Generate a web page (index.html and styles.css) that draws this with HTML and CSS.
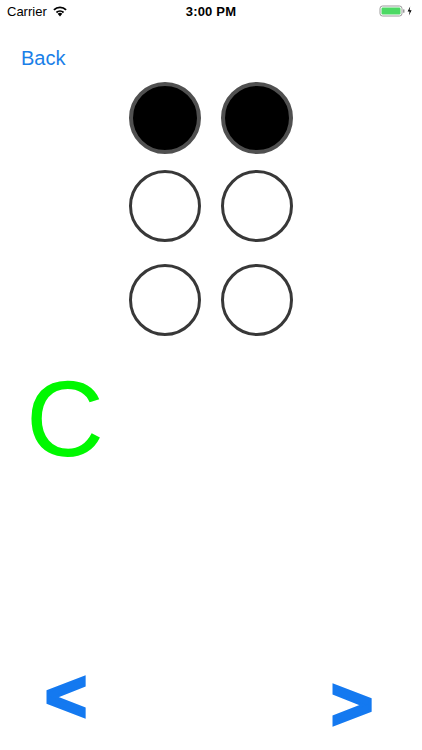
FILE: index.html
```html
<!DOCTYPE html>
<html>
<head>
<meta charset="utf-8">
<link rel="stylesheet" href="styles.css">
</head>
<body>
<div class="page">
  <div class="status">
    <div class="status-left">
      <span class="carrier">Carrier</span>
      <svg class="wifi" width="16" height="12" viewBox="0 0 15 11">
        <path d="M7.5 10.6 L5.3 8.1 A3.2 3.2 0 0 1 9.7 8.1 Z" fill="#000"/>
        <path d="M3.6 6.3 A5.6 5.6 0 0 1 11.4 6.3 L10.3 7.5 A4 4 0 0 0 4.7 7.5 Z" fill="#000"/>
        <path d="M1.2 3.8 A9 9 0 0 1 13.8 3.8 L12.6 5.1 A7.3 7.3 0 0 0 2.4 5.1 Z" fill="#000"/>
      </svg>
    </div>
    <div class="time">3:00 PM</div>
    <div class="status-right">
      <svg width="36" height="12" viewBox="0 0 36 12">
        <rect x="1" y="1" width="22" height="10" rx="2.5" fill="none" stroke="#9a9a9a" stroke-width="1"/>
        <rect x="2.5" y="2.5" width="19" height="7" rx="1.2" fill="#4cd964"/>
        <rect x="24" y="4.2" width="1.5" height="3.6" rx="0.6" fill="#9a9a9a"/>
        <path d="M31.2 1.5 L28.6 6.6 L30.6 6.6 L29.9 10.5 L32.6 5.2 L30.6 5.2 Z" fill="#000"/>
      </svg>
    </div>
  </div>

  <div class="nav">
    <a class="back">Back</a>
  </div>

  <div class="cells">
    <div class="dot filled"></div>
    <div class="dot filled"></div>
    <div class="dot"></div>
    <div class="dot"></div>
    <div class="dot row3"></div>
    <div class="dot row3"></div>
  </div>

  <div class="letter">C</div>

  <div class="arrows">
    <span class="arrow prev">&lt;</span>
    <span class="arrow next">&gt;</span>
  </div>
</div>
</body>
</html>
```

FILE: styles.css
```css
html, body {
  margin: 0;
  padding: 0;
  background: #ffffff;
}

.page {
  width: 422px;
  height: 750px;
  display: flex;
  flex-direction: column;
  font-family: "Liberation Sans", Arial, sans-serif;
  overflow: hidden;
}

.status {
  height: 22px;
  display: flex;
  align-items: center;
  justify-content: space-between;
  padding: 0 7px;
  font-size: 13px;
  color: #000;
}

.status-left {
  display: flex;
  align-items: center;
  gap: 5px;
  width: 120px;
}

.wifi {
  margin-top: -1px;
}

.time {
  font-weight: bold;
  letter-spacing: 0.2px;
}

.status-right {
  width: 120px;
  display: flex;
  justify-content: flex-end;
}

.nav {
  height: 24px;
  margin-top: 24px;
  padding-left: 21px;
}

.back {
  font-size: 20px;
  line-height: 24px;
  color: #1a7fe8;
}

.cells {
  margin-top: 12px;
  align-self: center;
  display: grid;
  grid-template-columns: 72px 72px;
  column-gap: 20px;
  row-gap: 16px;
}

.dot {
  width: 72px;
  height: 72px;
  box-sizing: border-box;
  border-radius: 50%;
  border: 3.5px solid #383838;
  background: #fff;
}

.dot.filled {
  background: #000;
  border: 4px solid #505050;
}

.dot.row3 {
  margin-top: 6px;
}

.letter {
  margin-top: 29px;
  padding-left: 26px;
  font-size: 108px;
  line-height: 108px;
  color: #00f800;
}

.arrows {
  margin-top: auto;
  height: 84px;
  display: flex;
  justify-content: space-between;
  align-items: flex-start;
  padding: 0 49px 0 45px;
}

.arrow {
  font-weight: bold;
  font-size: 72px;
  line-height: 60px;
  color: #1479f0;
  -webkit-text-stroke: 3px #1479f0;
}

.next {
  margin-top: 8px;
}
```
